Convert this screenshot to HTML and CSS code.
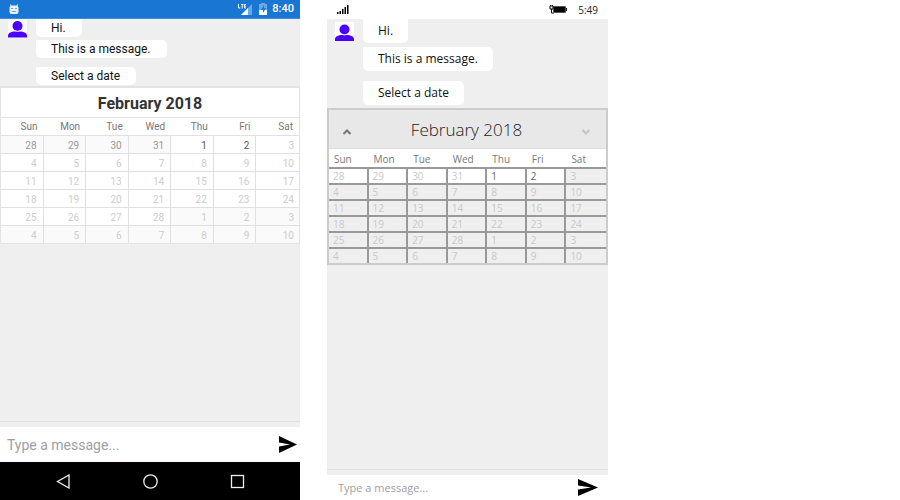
FILE: index.html
```html
<!DOCTYPE html>
<html lang="en">
<head>
<meta charset="utf-8">
<title>Date picker chat</title>
<link rel="stylesheet" href="styles.css">
</head>
<body>
<main class="devices">
  <section class="phone android">
    <header class="status">
      <svg class="robot" viewBox="0 0 12 12" width="12" height="12"><path d="M2.500 1l1 1.500h5l1-1.500.5.500-.6 1.500q1.100.5 1.100 2v4Q10.500 11 8.500 11h-5Q1.500 11 1.500 9V5q0-1.500 1.100-2L2 1.500z" fill="#e6f1fc"/><path d="M3 5h2v1H3zm4 0h2v1H7zM4 8h4v1H4z" fill="#1976d2" opacity=".6"/></svg>
      <svg class="signal" viewBox="0 0 15 12" width="15" height="12"><path d="M14 1v11H3z" fill="#69a9e8"/><path d="M10 5v7H3z" fill="#fff"/><path d="M.5 1v4h1.800M3 1.500h2.500M4.200 1.500v4M8 1.500H6.500V5H8M6.500 3.200H8" fill="none" stroke="#fff"/></svg>
      <svg class="charge" viewBox="0 0 8 12" width="8" height="12"><path d="M0 1h2V0h4v1h2v6H0z" fill="#69a9e8"/><path d="M0 7h8v5H0z" fill="#fff"/><path d="M5 2L2 7h2v3l3-5H5z" fill="#1976d2"/></svg>
      <time>8:40</time>
    </header>
    <div class="chat">
      <div class="thread">
        <svg class="avatar" viewBox="0 0 19 19" width="19" height="19"><path d="M0 0h19v19H0z" fill="#fff"/><circle cx="9.500" cy="7" r="5" fill="#4b00ff"/><path d="M0 18.500v-2C0 13.500 5 12 9.500 12S19 13.500 19 16.500v2z" fill="#4b00ff"/><path d="M4.500 11.500q5 1.800 10 0" fill="none" stroke="#fff"/></svg>
        <div class="messages">
          <p class="bubble">Hi.</p>
          <p class="bubble">This is a message.</p>
          <p class="bubble prompt">Select a date</p>
        </div>
      </div>
      <div class="calendar">
        <div class="month"><h2>February 2018</h2></div>
        <table>
          <thead><tr><th>Sun</th><th>Mon</th><th>Tue</th><th>Wed</th><th>Thu</th><th>Fri</th><th>Sat</th></tr></thead>
          <tbody>
            <tr><td class="past">28</td><td class="past">29</td><td class="past">30</td><td class="past">31</td><td class="open">1</td><td class="open">2</td><td>3</td></tr>
            <tr><td>4</td><td>5</td><td>6</td><td>7</td><td>8</td><td>9</td><td>10</td></tr>
            <tr><td>11</td><td>12</td><td>13</td><td>14</td><td>15</td><td>16</td><td>17</td></tr>
            <tr><td>18</td><td>19</td><td>20</td><td>21</td><td>22</td><td>23</td><td>24</td></tr>
            <tr><td>25</td><td>26</td><td>27</td><td>28</td><td class="next">1</td><td class="next">2</td><td class="next">3</td></tr>
            <tr><td class="next">4</td><td class="next">5</td><td class="next">6</td><td class="next">7</td><td class="next">8</td><td class="next">9</td><td class="next">10</td></tr>
          </tbody>
        </table>
      </div>
    </div>
    <form class="composer">
      <input type="text" placeholder="Type a message..." aria-label="Message">
      <button type="button" class="send" aria-label="Send"><svg viewBox="0 0 20 17" width="20" height="17"><path d="M1 0l18 8.500L1 17v-6.500l11-2L1 6.500z"/></svg></button>
    </form>
    <nav class="keys">
      <button type="button" aria-label="Back"><svg viewBox="0 0 15 15" width="15" height="15"><path d="M13 1v13L1.500 7.500z"/></svg></button>
      <button type="button" aria-label="Home"><svg viewBox="0 0 15 15" width="15" height="15"><circle cx="7.500" cy="7.500" r="6.700"/></svg></button>
      <button type="button" aria-label="Overview"><svg viewBox="0 0 15 15" width="15" height="15"><rect x="1.500" y="1.500" width="12" height="12"/></svg></button>
    </nav>
  </section>

  <section class="phone windows">
    <header class="status">
      <svg class="signal" viewBox="0 0 12 9" width="12" height="9"><path d="M0 7h1.500v2H0zM2.500 6H4v3H2.500zM5 4h1.500v5H5zM7.500 2H9v7H7.500zM10 0h1.500v9H10z"/></svg>
      <svg class="charge" viewBox="0 0 18 9" width="18" height="9"><path d="M4.500 1.500h12v6h-12z" fill="#fff" stroke="#555"/><path d="M5 2h11v5H5zM17 3h1v3h-1z"/><path d="M1 1h3v3H1zM2.500 4v4H5M1.500 0v1M3.500 0v1" fill="#fff" stroke="#000"/></svg>
      <time>5:49</time>
    </header>
    <div class="chat">
      <div class="thread">
        <svg class="avatar" viewBox="0 0 19 19" width="19" height="19"><path d="M0 0h19v19H0z" fill="#fff"/><circle cx="9.500" cy="7.500" r="5" fill="#4b00ff"/><path d="M0 19v-2C0 14 5 12.500 9.500 12.500S19 14 19 17v2z" fill="#4b00ff"/><path d="M4.500 12q5 1.800 10 0" fill="none" stroke="#fff"/></svg>
        <div class="messages">
          <p class="bubble">Hi.</p>
          <p class="bubble">This is a message.</p>
          <p class="bubble prompt">Select a date</p>
        </div>
      </div>
      <div class="calendar">
        <div class="month">
          <button type="button" aria-label="Previous month"><svg viewBox="0 0 8 6" width="8" height="6"><path d="M.5 5L4 1.500 7.500 5" stroke="#777"/></svg></button>
          <h2>February 2018</h2>
          <button type="button" aria-label="Next month"><svg viewBox="0 0 8 6" width="8" height="6"><path d="M.5 1L4 4.500 7.500 1" stroke="#c4c4c4"/></svg></button>
        </div>
        <table>
          <thead><tr><th>Sun</th><th>Mon</th><th>Tue</th><th>Wed</th><th>Thu</th><th>Fri</th><th>Sat</th></tr></thead>
          <tbody>
            <tr><td class="past">28</td><td class="past">29</td><td class="past">30</td><td class="past">31</td><td class="open">1</td><td class="open">2</td><td>3</td></tr>
            <tr><td>4</td><td>5</td><td>6</td><td>7</td><td>8</td><td>9</td><td>10</td></tr>
            <tr><td>11</td><td>12</td><td>13</td><td>14</td><td>15</td><td>16</td><td>17</td></tr>
            <tr><td>18</td><td>19</td><td>20</td><td>21</td><td>22</td><td>23</td><td>24</td></tr>
            <tr><td>25</td><td>26</td><td>27</td><td>28</td><td>1</td><td>2</td><td>3</td></tr>
            <tr><td>4</td><td>5</td><td>6</td><td>7</td><td>8</td><td>9</td><td>10</td></tr>
          </tbody>
        </table>
      </div>
    </div>
    <form class="composer">
      <input type="text" placeholder="Type a message..." aria-label="Message">
      <button type="button" class="send" aria-label="Send"><svg viewBox="0 0 20 17" width="20" height="17"><path d="M0 0l20 8.500L0 17v-6.500l13-2L0 6.500z"/></svg></button>
    </form>
  </section>
</main>
</body>
</html>
```
FILE: styles.css
```css
* { box-sizing: border-box; }
body { margin: 0; background: #fff; }
h2, p { margin: 0; font-weight: 400; }
svg { display: block; flex: none; }
button { border: 0; padding: 0; background: none; }

.devices {
  display: grid;
  grid-template-columns: 300fr 281fr 265fr;
  column-gap: 3%;
  min-height: 100vh;
}
.phone { display: flex; flex-direction: column; min-width: 0; background: #efefef; }
.android { font-family: Roboto, sans-serif; }
.windows { font-family: "Open Sans", "Noto Sans", sans-serif; }

.status { display: flex; align-items: center; height: 19px; }
.status .signal { margin-left: auto; }
.android .status { padding: 0 6px 0 8px; background: #1976d2; border-bottom: 1px solid #3b8ce0; color: #fff; font-size: 11px; font-weight: 500; line-height: 20px; }
.android .charge { margin: 0 5px 0 6px; }
.windows .status { padding: 0 10px; background: #fff; color: #222; font-size: 10px; }
.windows .status .signal { margin: 0 auto 0 0; }
.windows .charge { margin-right: 11px; }

.chat { flex: 1; border-bottom: 1px solid #e0e0e0; margin-bottom: 5px; }
.thread { display: flex; }
.messages { display: flex; flex-direction: column; align-items: flex-start; }
.bubble { background: #fff; border-radius: 0 5px 5px 5px; padding: 0 15px; color: #111; }
.bubble:first-child { border-radius: 0 0 5px 5px; }

.android .thread { gap: 9px; padding-left: 8px; height: 67px; }
.android .messages { gap: 3px; }
.android .bubble { font-size: 12px; line-height: 18px; padding: 0 16px 0 15px; }
.android .prompt { margin-top: 6px; }

.windows .thread { gap: 9px; padding-left: 8px; height: 89px; }
.windows .avatar { margin-top: 3px; }
.windows .messages { gap: 4px; }
.windows .bubble { font-size: 12px; line-height: 24px; }
.windows .prompt { margin-top: 6px; }

.month { display: flex; align-items: center; justify-content: center; }
table { width: 100%; table-layout: fixed; border-spacing: 0; }
th, td { padding: 0; font-weight: 400; }

.android .calendar { background: #fff; border: 1px solid #e3e3e3; border-top-width: 2px; }
.android .month { height: 30px; padding-top: 2px; border-bottom: 1px solid #e3e3e3; }
.android h2 { font-size: 16px; font-weight: 700; color: #333; }
.android th { height: 17px; padding-right: 6px; text-align: right; font-size: 10px; color: #777; }
.android td { height: 18px; padding: 2px 6px 0 0; text-align: right; font-size: 10px; line-height: 12px; color: #ccc; border-top: 1px solid #e0e0e0; border-right: 1px solid #e0e0e0; }
.android td:last-child { border-right: 0; padding-right: 5px; }
.android .past { background: #fafafa; color: #999; }
.android .open { color: #555; }
.android .next { background: #fafafa; }

.windows .calendar { border: 2px solid #ccc; }
.windows .month { height: 39px; padding: 0 16px 0 14px; justify-content: space-between; background: #e8e8e8; border-bottom: 1px solid #ddd; }
.windows h2 { font-size: 17px; font-weight: 300; color: #222; }
.windows .month svg { fill: none; stroke-width: 2; margin-top: 6px; }
.windows thead { background: #fff; }
.windows th { height: 18px; padding: 2px 0 0 5px; text-align: left; font-size: 10px; line-height: 14px; color: #777; }
.windows td { height: 16px; padding-left: 4px; text-align: left; font-size: 10px; line-height: 14px; color: #c8c8c8; border-top: 2px solid #999; border-right: 2px solid #999; }
.windows td:last-child { border-right: 0; }
.windows .past, .windows .open { background: #fff; }
.windows .open { color: #666; }

.composer { display: flex; align-items: center; background: #fff; }
.composer input { flex: 1; min-width: 0; border: 0; padding: 0; outline: 0; background: none; font-family: inherit; }
.composer input::placeholder { color: #a0a0a0; opacity: 1; }
.android .composer { height: 35px; padding: 0 2px 0 7px; }
.android .composer input { font-size: 14px; }
.windows .composer { height: 25px; padding: 0 10px 0 11px; }
.windows .composer input { font-size: 11px; }

.keys { display: flex; justify-content: center; gap: 24%; height: 38px; background: #000; }
.keys svg { fill: none; stroke: #eee; stroke-width: 1.3; }
```
